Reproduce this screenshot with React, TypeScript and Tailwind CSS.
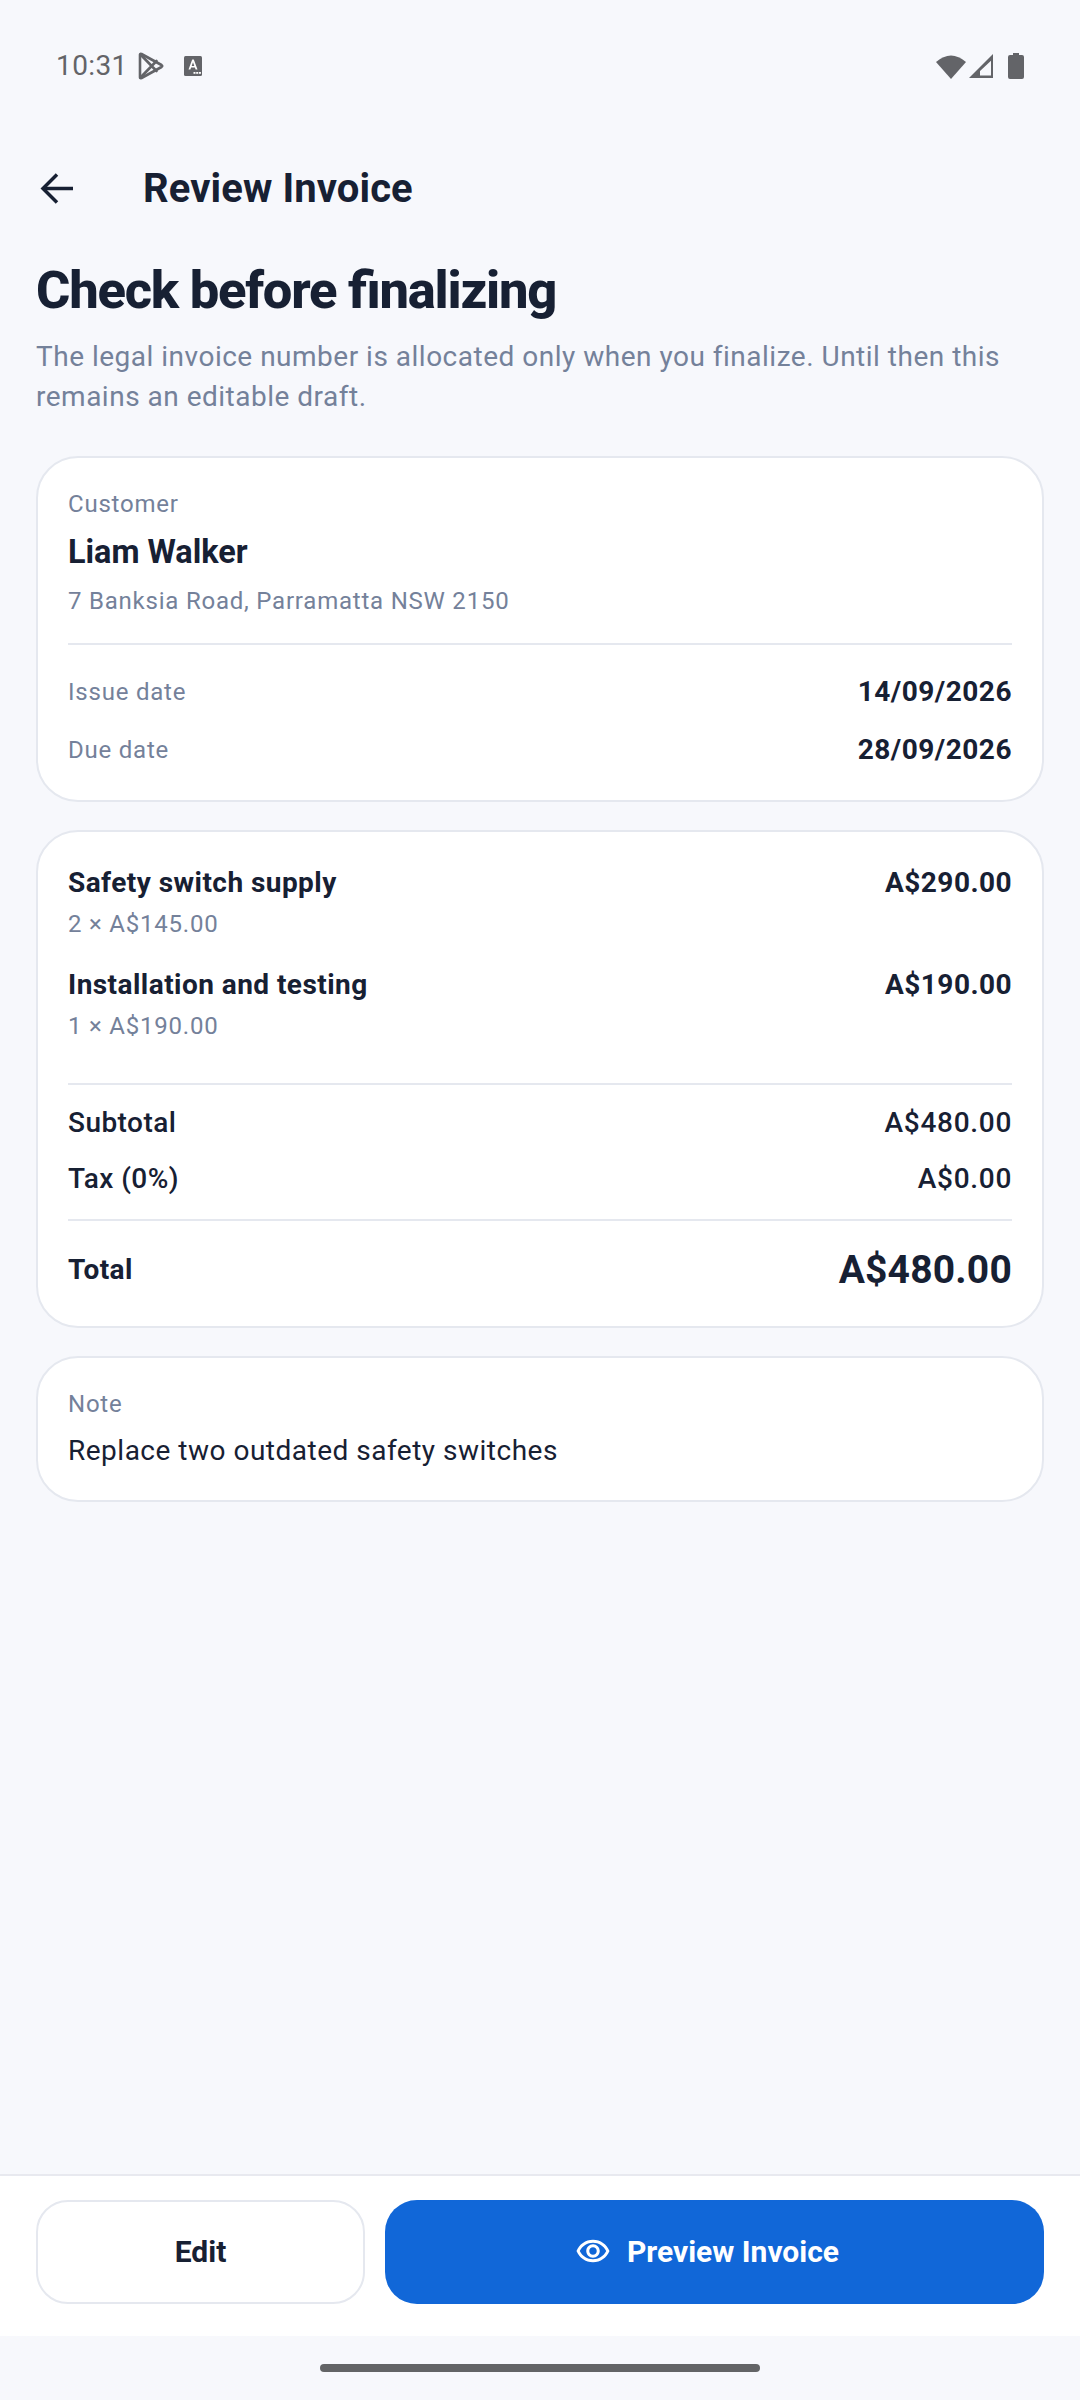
import React from "react";

function Row({ left, right, leftCls, rightCls, cls }: { left: string; right: string; leftCls: string; rightCls: string; cls: string }) {
  return (
    <div className={"flex items-center justify-between " + cls}>
      <span className={leftCls}>{left}</span>
      <span className={rightCls}>{right}</span>
    </div>
  );
}

const muted = "text-[#74819a] text-[24px] leading-[32px] tracking-[0.78px]";
const ink = "text-[#172033]";
const itemCls = "text-[28px] font-bold tracking-[0.45px] " + ink;
const sumCls = "text-[28px] font-medium tracking-[0.45px] " + ink;
const sumValCls = "text-[28px] font-medium tracking-[0.7px] " + ink;

export default function App() {
  return (
    <div className="w-[1080px] h-[2400px] bg-[#f7f8fc] flex flex-col" style={{ fontFamily: "Roboto, sans-serif" }}>
      {/* status bar */}
      <div className="h-[132px] shrink-0 flex items-center justify-between pl-[56px] pr-[56px]">
        <div className="flex items-center">
          <span className="text-[#636468] text-[28px] leading-[32px] tracking-[0.4px] w-[82px]">10:31</span>
          <svg width="26" height="28" viewBox="0 0 26 28" fill="none" stroke="#636468" strokeWidth="2.6" strokeLinejoin="round" strokeLinecap="round">
            <path d="M2 2.5 Q2 1.5 3.5 2 L23.5 13 Q25 14 23.5 15 L3.5 26 Q2 26.5 2 25.5 Z" />
            <path d="M2.5 2.5 L18.5 19 M2.5 25.5 L18.5 9" />
          </svg>
          <svg className="ml-[20px]" width="18" height="20" viewBox="0 0 18 20">
            <rect width="18" height="20" rx="1.5" fill="#636468" />
            <path d="M4.5 13.5 L8.2 3.5 H9.8 L13.5 13.5 H11.6 L10.9 11.5 H7.1 L6.4 13.5 Z M7.7 9.9 H10.3 L9 6.2 Z" fill="#fff" fillRule="evenodd" />
            <rect x="9.5" y="16" width="2" height="1.8" fill="#fff" />
            <rect x="12.2" y="16" width="2" height="1.8" fill="#fff" />
            <rect x="14.9" y="16" width="2" height="1.8" fill="#fff" />
          </svg>
        </div>
        <div className="flex items-center">
          <svg width="30" height="25" viewBox="0 0 30 25">
            <path d="M0 8 Q15 -5 30 8 L15 25 Z" fill="#636468" />
          </svg>
          <svg className="ml-[3px]" width="24" height="24" viewBox="0 0 24 24">
            <path d="M0 24 L24 0 V24 Z M11 21.5 H22 V6.7 L11 17 Z" fill="#636468" fillRule="evenodd" />
          </svg>
          <svg className="ml-[15px]" width="16" height="26" viewBox="0 0 16 26">
            <path d="M5 0 H11 V2 H14 Q16 2 16 4 V24 Q16 26 14 26 H2 Q0 26 0 24 V4 Q0 2 2 2 H5 Z" fill="#636468" />
          </svg>
        </div>
      </div>

      {/* app bar */}
      <div className="h-[112px] shrink-0 flex items-center pl-[40px]">
        <svg width="33" height="33" viewBox="0 0 33 33" fill="none" stroke="#172033" strokeWidth="3.5">
          <path d="M33 16.5 H3" />
          <path d="M17 2.5 L3 16.5 L17 30.5" />
        </svg>
        <span className={"ml-[70px] pt-[2px] text-[40px] leading-[48px] font-bold tracking-[0.1px] " + ink}>Review Invoice</span>
      </div>

      <div className="px-[36px] flex flex-col">
        <h1 className={"mt-[13px] text-[52.5px] leading-[66px] font-extrabold tracking-[-1.25px] [font-variant-ligatures:common-ligatures] [font-feature-settings:'liga'_1] " + ink}>Check before finalizing</h1>
        <p className="mt-[14px] text-[#74819a] text-[28px] leading-[40px] tracking-[0.5px]">
          The legal invoice number is allocated only when you finalize. Until then this remains an editable draft.
        </p>

        {/* customer */}
        <div className="mt-[39px] h-[346px] bg-white border-2 border-[#e5e8ef] rounded-[42px] px-[30px] pt-[30px] flex flex-col">
          <span className={muted}>Customer</span>
          <span className={"mt-[10px] text-[32.4px] leading-[44px] font-bold " + ink}>Liam Walker</span>
          <span className={"mt-[11px] " + muted}>7 Banksia Road, Parramatta NSW 2150</span>
          <div className="mt-[26px] h-[2px] bg-[#e5e8ef]" />
          <Row cls="mt-[31px] h-[32px]" left="Issue date" right="14/09/2026" leftCls={muted} rightCls={"text-[28px] font-bold tracking-[0.5px] " + ink} />
          <Row cls="mt-[26px] h-[32px]" left="Due date" right="28/09/2026" leftCls={muted} rightCls={"text-[28px] font-bold tracking-[0.5px] " + ink} />
        </div>

        {/* items */}
        <div className="mt-[28px] h-[498px] bg-white border-2 border-[#e5e8ef] rounded-[42px] px-[30px] pt-[31px] flex flex-col">
          <Row cls="h-[40px]" left="Safety switch supply" right="A$290.00" leftCls={itemCls} rightCls={itemCls} />
          <span className={"mt-[5px] " + muted}>2 × A$145.00</span>
          <Row cls="mt-[25px] h-[40px]" left="Installation and testing" right="A$190.00" leftCls={itemCls} rightCls={itemCls} />
          <span className={"mt-[5px] " + muted}>1 × A$190.00</span>
          <div className="mt-[41px] h-[2px] bg-[#e5e8ef]" />
          <Row cls="mt-[18px] h-[40px]" left="Subtotal" right="A$480.00" leftCls={sumCls} rightCls={sumValCls} />
          <Row cls="mt-[16px] h-[40px]" left="Tax (0%)" right="A$0.00" leftCls={sumCls} rightCls={sumValCls} />
          <div className="mt-[20px] h-[2px] bg-[#e5e8ef]" />
          <Row cls="mt-[24px] h-[50px]" left="Total" right="A$480.00" leftCls={itemCls} rightCls={"text-[39px] font-bold tracking-[0.2px] " + ink} />
        </div>

        {/* note */}
        <div className="mt-[28px] h-[146px] bg-white border-2 border-[#e5e8ef] rounded-[42px] px-[30px] pt-[30px] flex flex-col">
          <span className={muted}>Note</span>
          <span className={"mt-[11px] text-[28px] leading-[40px] tracking-[0.5px] " + ink}>Replace two outdated safety switches</span>
        </div>
      </div>

      <div className="flex-1" />

      {/* bottom bar */}
      <div className="h-[162px] shrink-0 bg-white border-t-2 border-[#e8e9ef] px-[36px] pt-[24px] flex gap-[20px]">
        <button className={"w-[329px] h-[104px] bg-white border-2 border-[#e5e8ef] rounded-[32px] pb-[2px] text-[30px] font-bold " + ink}>Edit</button>
        <button className="flex-1 h-[104px] bg-[#1167d8] rounded-[32px] pr-[15px] pb-[2px] text-white text-[30px] font-bold flex items-center justify-center">
          <svg width="36" height="36" viewBox="0 0 24 24" fill="#fff">
            <path d="M12 6.5c3.79 0 7.17 2.13 8.82 5.5-1.65 3.37-5.02 5.5-8.82 5.5S4.83 15.37 3.18 12C4.83 8.63 8.21 6.5 12 6.5m0-2C7 4.5 2.73 7.61 1 12c1.73 4.39 6 7.5 11 7.5s9.27-3.11 11-7.5c-1.73-4.39-6-7.5-11-7.5zm0 5c1.38 0 2.5 1.12 2.5 2.5s-1.12 2.5-2.5 2.5-2.5-1.12-2.5-2.5 1.12-2.5 2.5-2.5m0-2c-2.48 0-4.5 2.02-4.5 4.5s2.02 4.5 4.5 4.5 4.5-2.02 4.5-4.5-2.02-4.5-4.5-4.5z" />
          </svg>
          <span className="ml-[16px]">Preview Invoice</span>
        </button>
      </div>

      {/* gesture */}
      <div className="h-[64px] shrink-0 flex justify-center pt-[28px]">
        <div className="w-[440px] h-[8px] rounded-full bg-[#636466]" />
      </div>
    </div>
  );
}
